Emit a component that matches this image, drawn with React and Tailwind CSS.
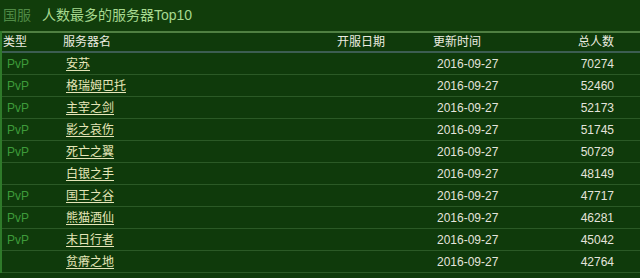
const rows = [
  { pvp: true, name: "安苏", total: "70274" },
  { pvp: true, name: "格瑞姆巴托", total: "52460" },
  { pvp: true, name: "主宰之剑", total: "52173" },
  { pvp: true, name: "影之哀伤", total: "51745" },
  { pvp: true, name: "死亡之翼", total: "50729" },
  { pvp: false, name: "白银之手", total: "48149" },
  { pvp: true, name: "国王之谷", total: "47717" },
  { pvp: true, name: "熊猫酒仙", total: "46281" },
  { pvp: true, name: "末日行者", total: "45042" },
  { pvp: false, name: "贫瘠之地", total: "42764" },
];

const font = { fontFamily: '"Liberation Sans", "Noto Sans CJK SC", sans-serif' };

export default function App() {
  return (
    <div className="h-[278px] w-[640px] overflow-hidden bg-[#0f3a0b] text-[12px]" style={font}>
      <div className="flex h-[31px] items-center gap-[11px] pl-[3px] bg-[#113d0b]">
        <span className="text-[14px] text-[#4f8a45]">国服</span>
        <span className="text-[14px] text-[#a6d98f]">人数最多的服务器Top10</span>
      </div>
      <div className="border-l-2 border-[#2f7a2a]">
        <div className="grid h-[22px] grid-cols-[58px_274px_96px_1fr_80px] items-center border-t-2 border-b-2 border-t-[#4f7f42] border-b-[#3c5d52] text-[#ecece0]">
          <span className="pl-px">类型</span>
          <span className="pl-[3px]">服务器名</span>
          <span className="pl-[3px]">开服日期</span>
          <span className="pl-[3px]">更新时间</span>
          <span className="pr-[26px] text-right">总人数</span>
        </div>
        {rows.map((r) => (
          <div
            key={r.name}
            className="grid h-[22px] grid-cols-[58px_274px_96px_1fr_80px] items-center border-b border-[#2b5926] pt-px"
          >
            <span className="pl-[5px] text-[#3e9a3a]">{r.pvp ? "PvP" : ""}</span>
            <span className="pl-[6px] text-[#e6e6b8] underline underline-offset-2">{r.name}</span>
            <span />
            <span className="pl-[7px] text-[#e4e4dc]">2016-09-27</span>
            <span className="pr-[26px] text-right text-[#e4e4dc]">{r.total}</span>
          </div>
        ))}
      </div>
    </div>
  );
}
